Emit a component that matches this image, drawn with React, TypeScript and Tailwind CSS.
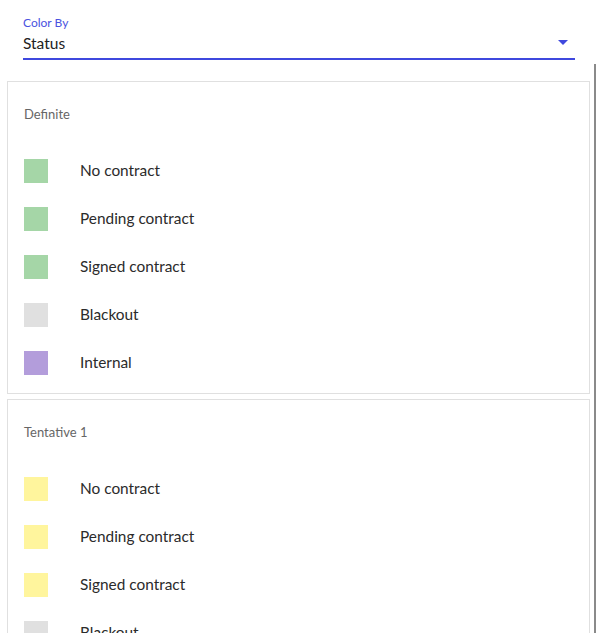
import React from "react";

type Item = { label: string; color: string };

const groups: { title: string; items: Item[] }[] = [
  {
    title: "Definite",
    items: [
      { label: "No contract", color: "bg-[#a5d6a7]" },
      { label: "Pending contract", color: "bg-[#a5d6a7]" },
      { label: "Signed contract", color: "bg-[#a5d6a7]" },
      { label: "Blackout", color: "bg-[#e0e0e0]" },
      { label: "Internal", color: "bg-[#b39ddb]" },
    ],
  },
  {
    title: "Tentative 1",
    items: [
      { label: "No contract", color: "bg-[#fff59d]" },
      { label: "Pending contract", color: "bg-[#fff59d]" },
      { label: "Signed contract", color: "bg-[#fff59d]" },
      { label: "Blackout", color: "bg-[#e0e0e0]" },
      { label: "Internal", color: "bg-[#b39ddb]" },
    ],
  },
];

export default function App() {
  return (
    <div
      className="relative h-[633px] w-[596px] overflow-hidden bg-white"
      style={{ fontFamily: '"Source Sans Pro", Lato, "Noto Sans", sans-serif' }}
    >
      <div className="pl-[23px] pr-[21px] pt-[15px]">
        <div className="text-[12px] leading-[15px] text-[#4a52e0]">Color By</div>
        <div className="flex h-[30px] items-center justify-between border-b-2 border-[#3f48de]">
          <span className="text-[15.5px] text-[#222]">Status</span>
          <svg width="10" height="6" viewBox="0 0 10 6" className="mr-[7px] mt-[-2px]">
            <path d="M0 0 L10 0 L5 5 Z" fill="#3f48de" />
          </svg>
        </div>
      </div>
      <div className="absolute right-0 top-[64px] h-[569px] w-[2px] bg-[#8a8a8a]" />
      <div className="mt-[21px] flex flex-col gap-[5px] pl-[7px] pr-[6px]">
        {groups.map((g) => (
          <div key={g.title} className="border border-[#e0e0e0] px-[16px] pb-[6px] pt-[23px]">
            <div className="text-[13px] leading-[18px] text-[#666]">{g.title}</div>
            <div className="mt-[24px] flex flex-col">
              {g.items.map((it, i) => (
                <div key={i} className="flex h-[48px] items-center">
                  <div className={`h-[24px] w-[24px] ${it.color}`} />
                  <span className="ml-[32px] text-[15.4px] text-[#2b2b2b]">{it.label}</span>
                </div>
              ))}
            </div>
          </div>
        ))}
      </div>
    </div>
  );
}
